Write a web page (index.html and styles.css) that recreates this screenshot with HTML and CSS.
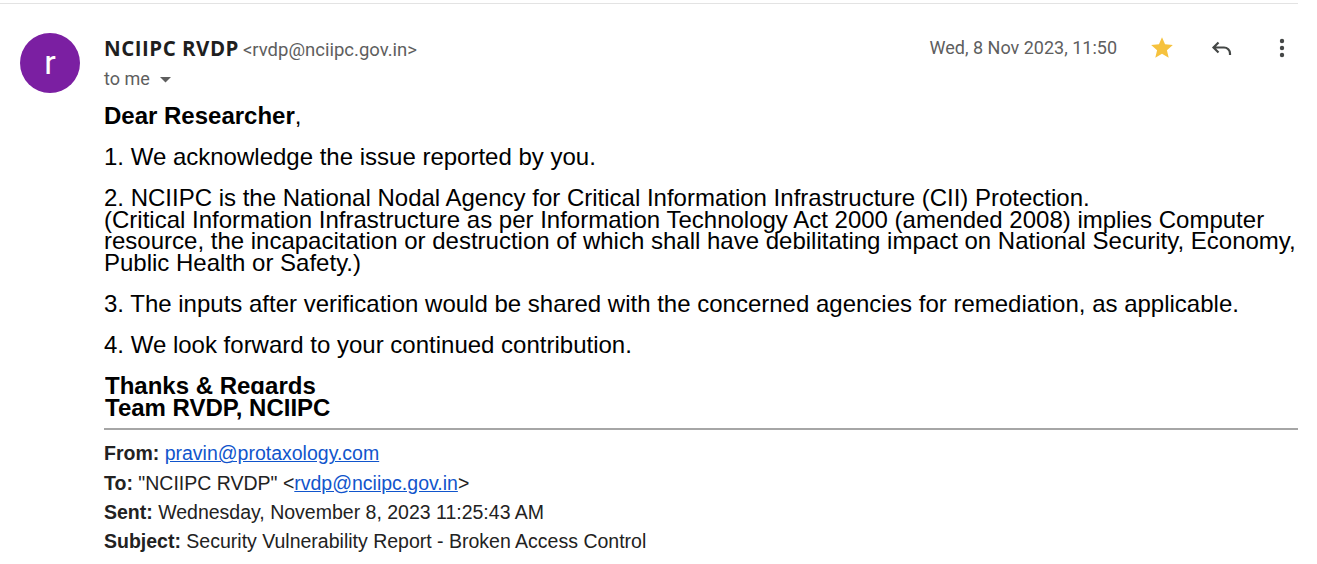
FILE: index.html
```html
<!DOCTYPE html>
<html>
<head>
<meta charset="utf-8">
<link rel="stylesheet" href="styles.css">
</head>
<body>
<div class="page">
  <div class="msg">
    <div class="avatar">r</div>
    <div class="main">
      <div class="head">
        <div class="who">
          <div class="sender"><span class="name">NCIIPC RVDP</span> <span class="addr">&lt;rvdp@nciipc.gov.in&gt;</span></div>
          <div class="tome">to me <svg class="caret" width="11" height="6" viewBox="0 0 11 6"><path d="M0 0 H11 L5.5 5.5 Z" fill="#5e5e5e"/></svg></div>
        </div>
        <div class="date">Wed, 8 Nov 2023, 11:50</div>
        <div class="actions">
          <span class="btn"><svg width="26" height="26" viewBox="0 0 24 24"><path d="M12 17.27L18.18 21l-1.64-7.03L22 9.24l-7.19-.61L12 2 9.19 8.63 2 9.24l5.46 4.73L5.82 21z" fill="#f6c23e"/></svg></span>
          <span class="btn"><svg width="24" height="24" viewBox="0 0 24 24"><path d="M8.5 6.5 L3.5 11.5 L8.5 16.5 M3.5 11.5 H14 a6 6 0 0 1 6 6 V19" fill="none" stroke="#444746" stroke-width="2.2"/></svg></span>
          <span class="btn"><svg width="24" height="24" viewBox="0 0 24 24"><circle cx="12" cy="5" r="2.2" fill="#444746"/><circle cx="12" cy="12" r="2.2" fill="#444746"/><circle cx="12" cy="19" r="2.2" fill="#444746"/></svg></span>
        </div>
      </div>
      <div class="body">
        <p><b>Dear Researcher</b>,</p>
        <p>1. We acknowledge the issue reported by you.</p>
        <p>2. NCIIPC is the National Nodal Agency for Critical Information Infrastructure (CII) Protection.<br>(Critical Information Infrastructure as per Information Technology Act 2000 (amended 2008) implies Computer resource, the incapacitation or destruction of which shall have debilitating impact on National Security, Economy, Public Health or Safety.)</p>
        <p>3. The inputs after verification would be shared with the concerned agencies for remediation, as applicable.</p>
        <p class="last">4. We look forward to your continued contribution.</p>
        <div class="sig">
          <div class="sig-clip">Thanks &amp; Regards</div>
          <div class="sig-line">Team RVDP, NCIIPC</div>
        </div>
        <div class="rule"></div>
        <div class="fwd">
          <div><b>From:</b> <a href="#">pravin@protaxology.com</a></div>
          <div><b>To:</b> "NCIIPC RVDP" &lt;<a href="#">rvdp@nciipc.gov.in</a>&gt;</div>
          <div><b>Sent:</b> Wednesday, November 8, 2023 11:25:43 AM</div>
          <div><b>Subject:</b> Security Vulnerability Report - Broken Access Control</div>
        </div>
      </div>
    </div>
  </div>
</div>
</body>
</html>
```

FILE: styles.css
```css
html, body {
  margin: 0;
  padding: 0;
  background: #ffffff;
}
.page {
  padding-top: 3px;
}
.msg {
  width: 1298px;
  border-top: 1px solid #e3e3e3;
  padding: 29px 0 0 20px;
  box-sizing: border-box;
  display: flex;
  gap: 24px;
  align-items: flex-start;
}
.avatar {
  flex: none;
  width: 60px;
  height: 60px;
  border-radius: 50%;
  background: #7b1fa2;
  color: #fff;
  font-family: Roboto, "Liberation Sans", sans-serif;
  font-size: 34px;
  line-height: 58px;
  text-align: center;
}
.main {
  flex: 1;
  margin-top: 3px;
  min-width: 0;
}
.head {
  display: flex;
  align-items: flex-start;
  font-family: Roboto, "Liberation Sans", sans-serif;
}
.who {
  flex: 1;
}
.sender {
  line-height: 24px;
  height: 24px;
  white-space: nowrap;
}
.name {
  font-family: "Open Sans", Roboto, sans-serif;
  font-weight: 700;
  font-size: 20.5px;
  letter-spacing: 0.5px;
  color: #1f1f1f;
}
.addr {
  font-size: 18.5px;
  color: #5e5e5e;
}
.tome {
  margin-top: 7px;
  line-height: 24px;
  font-size: 18px;
  color: #5e5e5e;
  display: flex;
  align-items: center;
  gap: 10px;
}
.caret {
  margin-top: 1px;
}
.date {
  font-size: 18px;
  color: #5e5e5e;
  line-height: 24px;
  margin-right: 29px;
  white-space: nowrap;
}
.actions {
  display: flex;
  gap: 28px;
}
.btn {
  width: 32px;
  height: 24px;
  display: flex;
  align-items: center;
  justify-content: center;
}
.body {
  margin-top: 14px;
  font-family: "Liberation Sans", Arial, sans-serif;
  color: #000;
  font-size: 24px;
  line-height: 21.7px;
}
.body p {
  margin: 0 0 19.3px 0;
}
.body p.last {
  margin-bottom: 19.2px;
}
.sig {
  font-weight: 700;
  font-size: 24px;
  padding-left: 1px;
}
.sig-clip {
  height: 19px;
  overflow: hidden;
  margin-bottom: 3px;
  line-height: 22px;
}
.sig-line {
  line-height: 22px;
}
.rule {
  margin-top: 9px;
  height: 0;
  border-top: 2px solid #a6a6a6;
}
.fwd {
  margin-top: 9.4px;
  font-size: 19.5px;
  line-height: 29.3px;
  color: #222;
}
.fwd b {
  color: #222;
}
.fwd a {
  color: #1155cc;
  text-decoration: underline;
}
```
